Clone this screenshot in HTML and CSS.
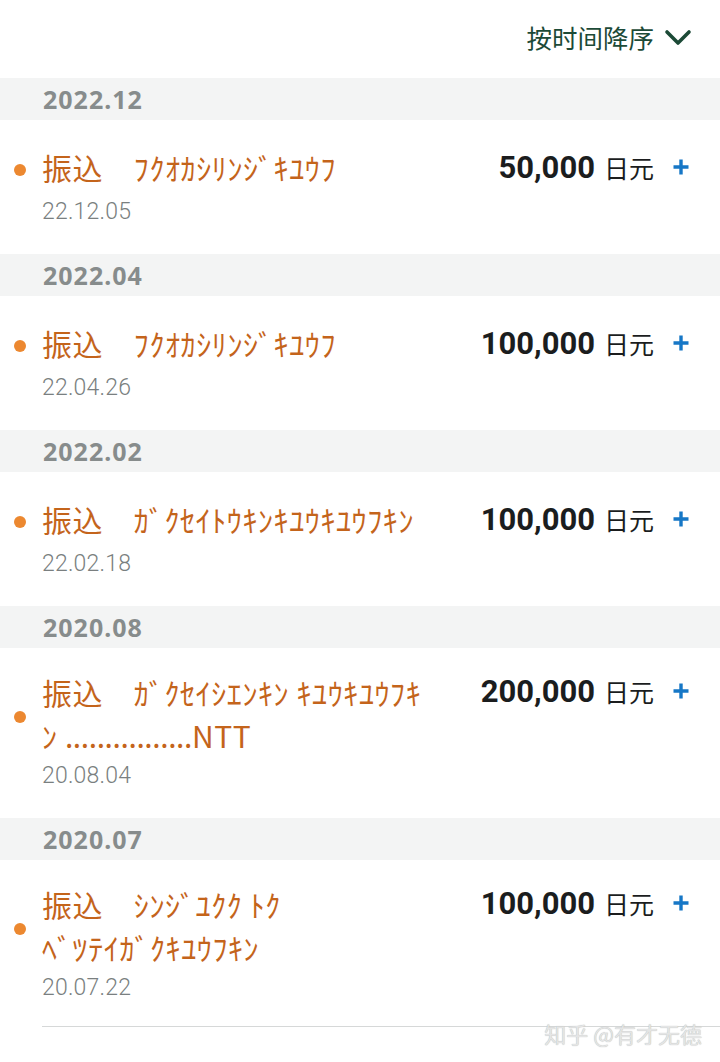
FILE: index.html
```html
<!DOCTYPE html>
<html lang="zh">
<head>
<meta charset="utf-8">
<link rel="stylesheet" href="styles.css">
</head>
<body>
<div class="page">
  <header class="top">
    <span class="sort">按时间降序</span>
    <svg class="chev" width="28" height="18" viewBox="0 0 28 18"><polyline points="3,3 14,14 25,3" fill="none" stroke="#1c4a37" stroke-width="3.6" stroke-linecap="round" stroke-linejoin="round"/></svg>
  </header>

  <div class="band">2022.12</div>
  <div class="row">
    <span class="dot"></span>
    <div class="title">振込　ﾌｸｵｶｼﾘﾝｼﾞｷﾕｳﾌ</div>
    <div class="date">22.12.05</div>
    <div class="amt"><span class="num">50,000</span><span class="cur">日元</span><svg class="plus" width="18" height="18" viewBox="0 0 18 18"><path d="M9 1.5V16.5M1.5 9H16.5" stroke="#1677c6" stroke-width="3.4"/></svg></div>
  </div>

  <div class="band">2022.04</div>
  <div class="row">
    <span class="dot"></span>
    <div class="title">振込　ﾌｸｵｶｼﾘﾝｼﾞｷﾕｳﾌ</div>
    <div class="date">22.04.26</div>
    <div class="amt"><span class="num">100,000</span><span class="cur">日元</span><svg class="plus" width="18" height="18" viewBox="0 0 18 18"><path d="M9 1.5V16.5M1.5 9H16.5" stroke="#1677c6" stroke-width="3.4"/></svg></div>
  </div>

  <div class="band">2022.02</div>
  <div class="row">
    <span class="dot"></span>
    <div class="title">振込　ｶﾞｸｾｲﾄｳｷﾝｷﾕｳｷﾕｳﾌｷﾝ</div>
    <div class="date">22.02.18</div>
    <div class="amt"><span class="num">100,000</span><span class="cur">日元</span><svg class="plus" width="18" height="18" viewBox="0 0 18 18"><path d="M9 1.5V16.5M1.5 9H16.5" stroke="#1677c6" stroke-width="3.4"/></svg></div>
  </div>

  <div class="band">2020.08</div>
  <div class="row two">
    <span class="dot"></span>
    <div class="title">振込　ｶﾞｸｾｲｼｴﾝｷﾝ ｷﾕｳｷﾕｳﾌｷ<br>ﾝ <span class="dots">................</span>NTT</div>
    <div class="date">20.08.04</div>
    <div class="amt"><span class="num">200,000</span><span class="cur">日元</span><svg class="plus" width="18" height="18" viewBox="0 0 18 18"><path d="M9 1.5V16.5M1.5 9H16.5" stroke="#1677c6" stroke-width="3.4"/></svg></div>
  </div>

  <div class="band">2020.07</div>
  <div class="row two last">
    <span class="dot"></span>
    <div class="title">振込　ｼﾝｼﾞﾕｸｸ ﾄｸ<br>ﾍﾞﾂﾃｲｶﾞｸｷﾕｳﾌｷﾝ</div>
    <div class="date">20.07.22</div>
    <div class="amt"><span class="num">100,000</span><span class="cur">日元</span><svg class="plus" width="18" height="18" viewBox="0 0 18 18"><path d="M9 1.5V16.5M1.5 9H16.5" stroke="#1677c6" stroke-width="3.4"/></svg></div>
  </div>
  <div class="rule"></div>
  <div class="mark">知乎 @有才无德</div>
</div>
</body>
</html>
```

FILE: styles.css
```css
html, body {
  margin: 0;
  padding: 0;
  background: #ffffff;
}
body {
  font-family: "Noto Sans", "Noto Sans CJK SC", sans-serif;
}
.page {
  position: relative;
  width: 720px;
  height: 1062px;
  overflow: hidden;
}
.top {
  height: 78px;
  display: flex;
  align-items: center;
  justify-content: flex-end;
  padding-right: 28px;
  gap: 10px;
}
.sort {
  font-family: "Noto Sans CJK SC", sans-serif;
  font-size: 25.5px;
  color: #1c4a37;
  line-height: 1;
  margin-top: -5px;
}
.chev {
  display: block;
  margin-top: -3px;
}
.band {
  height: 42px;
  background: #f3f4f4;
  padding-left: 43px;
  display: flex;
  align-items: center;
  font-family: "Noto Sans", sans-serif;
  font-weight: 700;
  font-size: 25px;
  letter-spacing: 1px;
  color: #878c8c;
}
.row {
  display: grid;
  grid-template-columns: 28px 1fr auto;
  grid-template-rows: auto auto;
  padding: 27px 30px 27px 14px;
}
.row.two {
  padding-top: 23px;
}
.row.last {
  padding-bottom: 23px;
}
.dot {
  grid-column: 1;
  grid-row: 1;
  align-self: center;
  width: 12px;
  height: 12px;
  border-radius: 50%;
  background: #ec8830;
  margin-top: 5px;
}
.title {
  grid-column: 2;
  grid-row: 1;
  font-family: "Noto Sans CJK JP", sans-serif;
  font-size: 30px;
  letter-spacing: 0.6px;
  line-height: 41px;
  color: #c4641b;
}
.two .title {
  line-height: 43px;
}
.dots {
  letter-spacing: -0.4px;
}
.date {
  grid-column: 2;
  grid-row: 2;
  margin-top: 9px;
  font-family: "Roboto", "Noto Sans", sans-serif;
  font-weight: 300;
  font-size: 23px;
  letter-spacing: 0.2px;
  line-height: 30px;
  color: #7a7f80;
}
.two .date {
  margin-top: 4px;
}
.amt {
  grid-column: 3;
  grid-row: 1;
  align-self: start;
  display: flex;
  align-items: center;
  height: 40px;
}
.num {
  font-family: "Roboto", "Noto Sans", sans-serif;
  font-weight: 700;
  font-size: 31px;
  color: #1b1d1e;
}
.cur {
  font-family: "Noto Sans CJK SC", sans-serif;
  font-size: 25px;
  color: #1b1d1e;
  margin-left: 9px;
}
.plus {
  display: block;
  margin-left: 18px;
}
.rule {
  margin-left: 42px;
  height: 1px;
  background: #d6d8d8;
}
.mark {
  position: absolute;
  right: 18px;
  top: 1017px;
  font-family: "Noto Sans CJK SC", sans-serif;
  font-size: 22px;
  color: #e4e5e5;
  text-shadow: 0 0 1px #a9abab;
}
```
